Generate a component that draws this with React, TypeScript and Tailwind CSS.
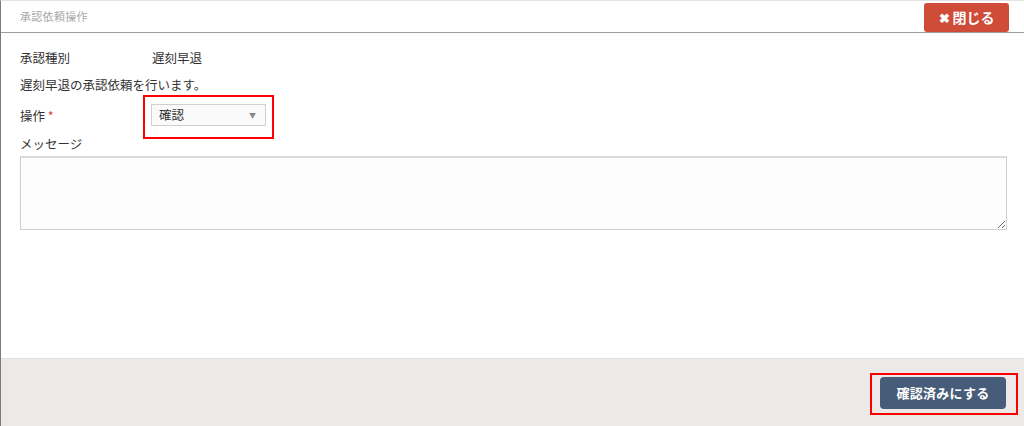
export default function App() {
  return (
    <div className="h-[426px] w-[1024px] flex flex-col bg-white border-l border-[#7a7a7a] border-t border-t-[#e2e2e2] text-[#333] font-['Noto_Sans_CJK_JP','Noto_Sans',sans-serif]">
      {/* header */}
      <div className="h-[32px] flex items-center justify-between pl-[19px] pr-[15px] border-b border-[#9d9d9d]">
        <div className="text-[11px] text-[#a9a9a9] tracking-[0.3px]">承認依頼操作</div>
        <button className="h-[29px] mt-[2px] w-[85px] rounded-[3px] bg-[#cf4c39] text-white text-[14px] font-bold flex items-center justify-center gap-[3px]">
          <span className="text-[13px]">✖</span>閉じる
        </button>
      </div>

      {/* body */}
      <div className="flex-1 pl-[19px] pr-[17px] pt-[16px] text-[12.5px]">
        <div className="flex items-center h-[18px]">
          <div className="w-[132px]">承認種別</div>
          <div>遅刻早退</div>
        </div>
        <div className="mt-[9px] h-[18px] flex items-center">遅刻早退の承認依頼を行います。</div>
        <div className="flex items-center">
          <div className="w-[123px]">
            操作 <span className="text-[#e03a3a]">*</span>
          </div>
          <div className="border-[2.5px] border-[#f00] w-[131px] h-[44px] mt-[1px] pl-[6px] pt-[7px]">
            <div className="w-[115px] h-[22px] border border-[#d0d0d0] bg-[#fafafa] flex items-center justify-between pl-[7px] pr-[9px]">
              <span>確認</span>
              <span className="text-[7px] text-[#888]">▼</span>
            </div>
          </div>
        </div>
        <div className="mt-[-2px] h-[14px] flex items-center">メッセージ</div>
        <textarea className="mt-[5px] block w-[987px] h-[74px] border border-[#cfcfcf] border-t-2 border-t-[#d9d9d9] bg-[#fdfdfd] outline-none" />
      </div>

      {/* footer */}
      <div className="h-[68px] bg-[#ede9e9] border-t border-[#e3dfdf] flex justify-end items-start pt-[14px] pr-[6px]">
        <div className="border-[2.5px] border-[#f00] w-[148px] h-[42px] pl-[8px] pt-[2px]">
          <button className="w-[126px] h-[32px] rounded-[4px] bg-[#475c78] text-white text-[13px] font-bold tracking-[0.3px]">
            確認済みにする
          </button>
        </div>
      </div>
    </div>
  );
}
